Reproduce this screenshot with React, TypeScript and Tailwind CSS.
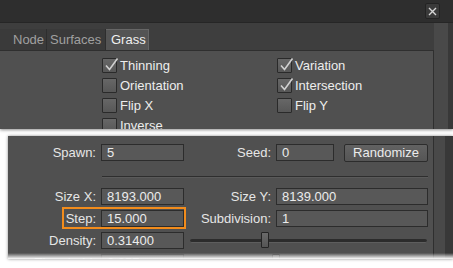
import React from 'react';

const font = "font-['Liberation_Sans',Arial,sans-serif]";

function CheckBox({ checked, label }: { checked?: boolean; label?: string }) {
  if (!label) return <div className="h-[20px]" />;
  return (
    <div className="flex items-center h-[20px]">
      <div className="relative w-[15px] h-[15px] border border-[#2a2a2a] rounded-[1px] bg-gradient-to-b from-[#676767] to-[#575757]">
        {checked && (
          <svg className="absolute left-[1px] top-[-2px]" width="15" height="15" viewBox="0 0 15 15">
            <path d="M2 8.5 L5.5 12.5 L13.5 1.5" fill="none" stroke="#d0d0d0" strokeWidth="1.6" />
          </svg>
        )}
      </div>
      <span className="ml-[3px] text-[13px] text-[#ededed] leading-none">{label}</span>
    </div>
  );
}

function Field({ value, w }: { value: string; w: string }) {
  return (
    <div className={`${w} h-[17px] border border-[#2c2c2c] bg-[#585858] pl-[5px] text-[13px] leading-[15px] text-[#ececec]`}>
      {value}
    </div>
  );
}

function Label({ text, w }: { text: string; w: string }) {
  return <div className={`${w} text-right pr-[5px] text-[13px] text-[#e6e6e6] leading-[17px]`}>{text}</div>;
}

function Slider({ pos }: { pos: number }) {
  return (
    <div className="relative flex-1 h-[17px] flex items-center">
      <div className="w-full h-[4px] rounded-full bg-[#2c2c2c] border-b border-[#5e5e5e]" />
      <div
        className="absolute top-0 w-[8px] h-[16px] border border-[#242424] rounded-[1px] bg-gradient-to-b from-[#6a6a6a] to-[#555]"
        style={{ left: pos }}
      />
    </div>
  );
}

export default function App() {
  return (
    <div className={`w-[453px] h-[268px] bg-white overflow-hidden flex flex-col ${font}`}>
      {/* top piece: dialog header, tabs, checkboxes */}
      <div className="h-[129px] shrink-0 overflow-hidden bg-[#494949] flex flex-col shadow-[0_1px_3px_rgba(0,0,0,0.45)]">
        <div className="h-[23px] shrink-0 bg-[#2e2e2e] border-b border-[#262626] flex items-center justify-end pr-[13px]">
          <div className="w-[15px] h-[16px] rounded-[2px] bg-[#3a3a3a] border border-[#232323] flex items-center justify-center">
            <svg width="9" height="9" viewBox="0 0 9 9">
              <path d="M1 1 L8 8 M8 1 L1 8" stroke="#d6d6d6" strokeWidth="1.4" />
            </svg>
          </div>
        </div>
        <div className="flex flex-1">
          <div className="w-[434px] flex flex-col">
            <div className="flex h-[27px] items-end bg-[#3e3e3e]">
              <div className="w-[47px] h-[21px] bg-[#3a3a3a] border-r border-[#2e2e2e] text-[13px] text-[#a0a0a0] pl-[13px] leading-[21px]">Node</div>
              <div className="w-[59px] h-[21px] bg-[#3a3a3a] border-r border-[#2e2e2e] text-[13px] text-[#a0a0a0] pl-[3px] leading-[21px]">Surfaces</div>
              <div className="w-[43px] h-[21px] bg-[#545454] border-t border-r border-[#666] text-[13px] text-[#f0f0f0] pl-[5px] leading-[20px]">Grass</div>
            </div>
            <div className="flex-1 bg-[#505050] border-t border-r border-[#2f2f2f] pt-[4px] pl-[102px] grid grid-cols-[175px_1fr] content-start">
              <CheckBox checked label="Thinning" />
              <CheckBox checked label="Variation" />
              <CheckBox label="Orientation" />
              <CheckBox checked label="Intersection" />
              <CheckBox label="Flip X" />
              <CheckBox label="Flip Y" />
              <CheckBox label="Inverse" />
              <CheckBox />
            </div>
          </div>
          <div className="w-[14px] bg-[#494949]" />
          <div className="flex-1 bg-[#383838]" />
        </div>
      </div>

      {/* bottom piece: generator fields */}
      <div className="relative mt-[7px] ml-[8px] h-[123px] shrink-0 overflow-hidden flex shadow-[0_0_3px_rgba(0,0,0,0.45)]">
        <div className="w-[426px] bg-[#505050] border-r border-[#2f2f2f] pt-[8px] flex flex-col">
          <div className="flex items-start">
            <Label text="Spawn:" w="w-[93px]" />
            <Field value="5" w="w-[83px]" />
            <Label text="Seed:" w="w-[92px]" />
            <Field value="0" w="w-[58px]" />
            <div className="ml-[10px] w-[84px] h-[18px] rounded-[2px] border border-[#2c2c2c] bg-gradient-to-b from-[#626262] to-[#555] text-[13px] text-[#ececec] leading-[16px] text-center">
              Randomize
            </div>
          </div>
          <div className="ml-[94px] w-[326px] mt-[14px] h-[2px] border-t border-[#2e2e2e] border-b border-b-[#5a5a5a]" />
          <div className="mt-[10px] flex flex-col gap-[5px]">
            <div className="flex">
              <Label text="Size X:" w="w-[93px]" />
              <Field value="8193.000" w="w-[83px]" />
              <Label text="Size Y:" w="w-[92px]" />
              <Field value="8139.000" w="w-[152px]" />
            </div>
            <div className="relative flex">
              <div className="absolute left-[54px] top-[-3px] w-[124px] h-[22px] border-2 border-[#f28c1c]" />
              <Label text="Step:" w="w-[93px]" />
              <Field value="15.000" w="w-[83px]" />
              <Label text="Subdivision:" w="w-[92px]" />
              <Field value="1" w="w-[152px]" />
            </div>
            <div className="flex">
              <Label text="Density:" w="w-[93px]" />
              <Field value="0.31400" w="w-[83px]" />
              <div className="w-[6px]" />
              <Slider pos={71} />
              <div className="w-[6px]" />
            </div>
            <div className="flex opacity-60">
              <Label text="Threshold:" w="w-[93px]" />
              <Field value="0.357" w="w-[83px]" />
              <div className="w-[6px]" />
              <Slider pos={82} />
              <div className="w-[6px]" />
            </div>
          </div>
        </div>
        <div className="w-[11px] bg-[#494949]" />
        <div className="flex-1 bg-[#383838]" />
        <div className="absolute left-0 right-0 bottom-0 h-[6px] bg-gradient-to-b from-transparent to-white" />
      </div>
    </div>
  );
}
